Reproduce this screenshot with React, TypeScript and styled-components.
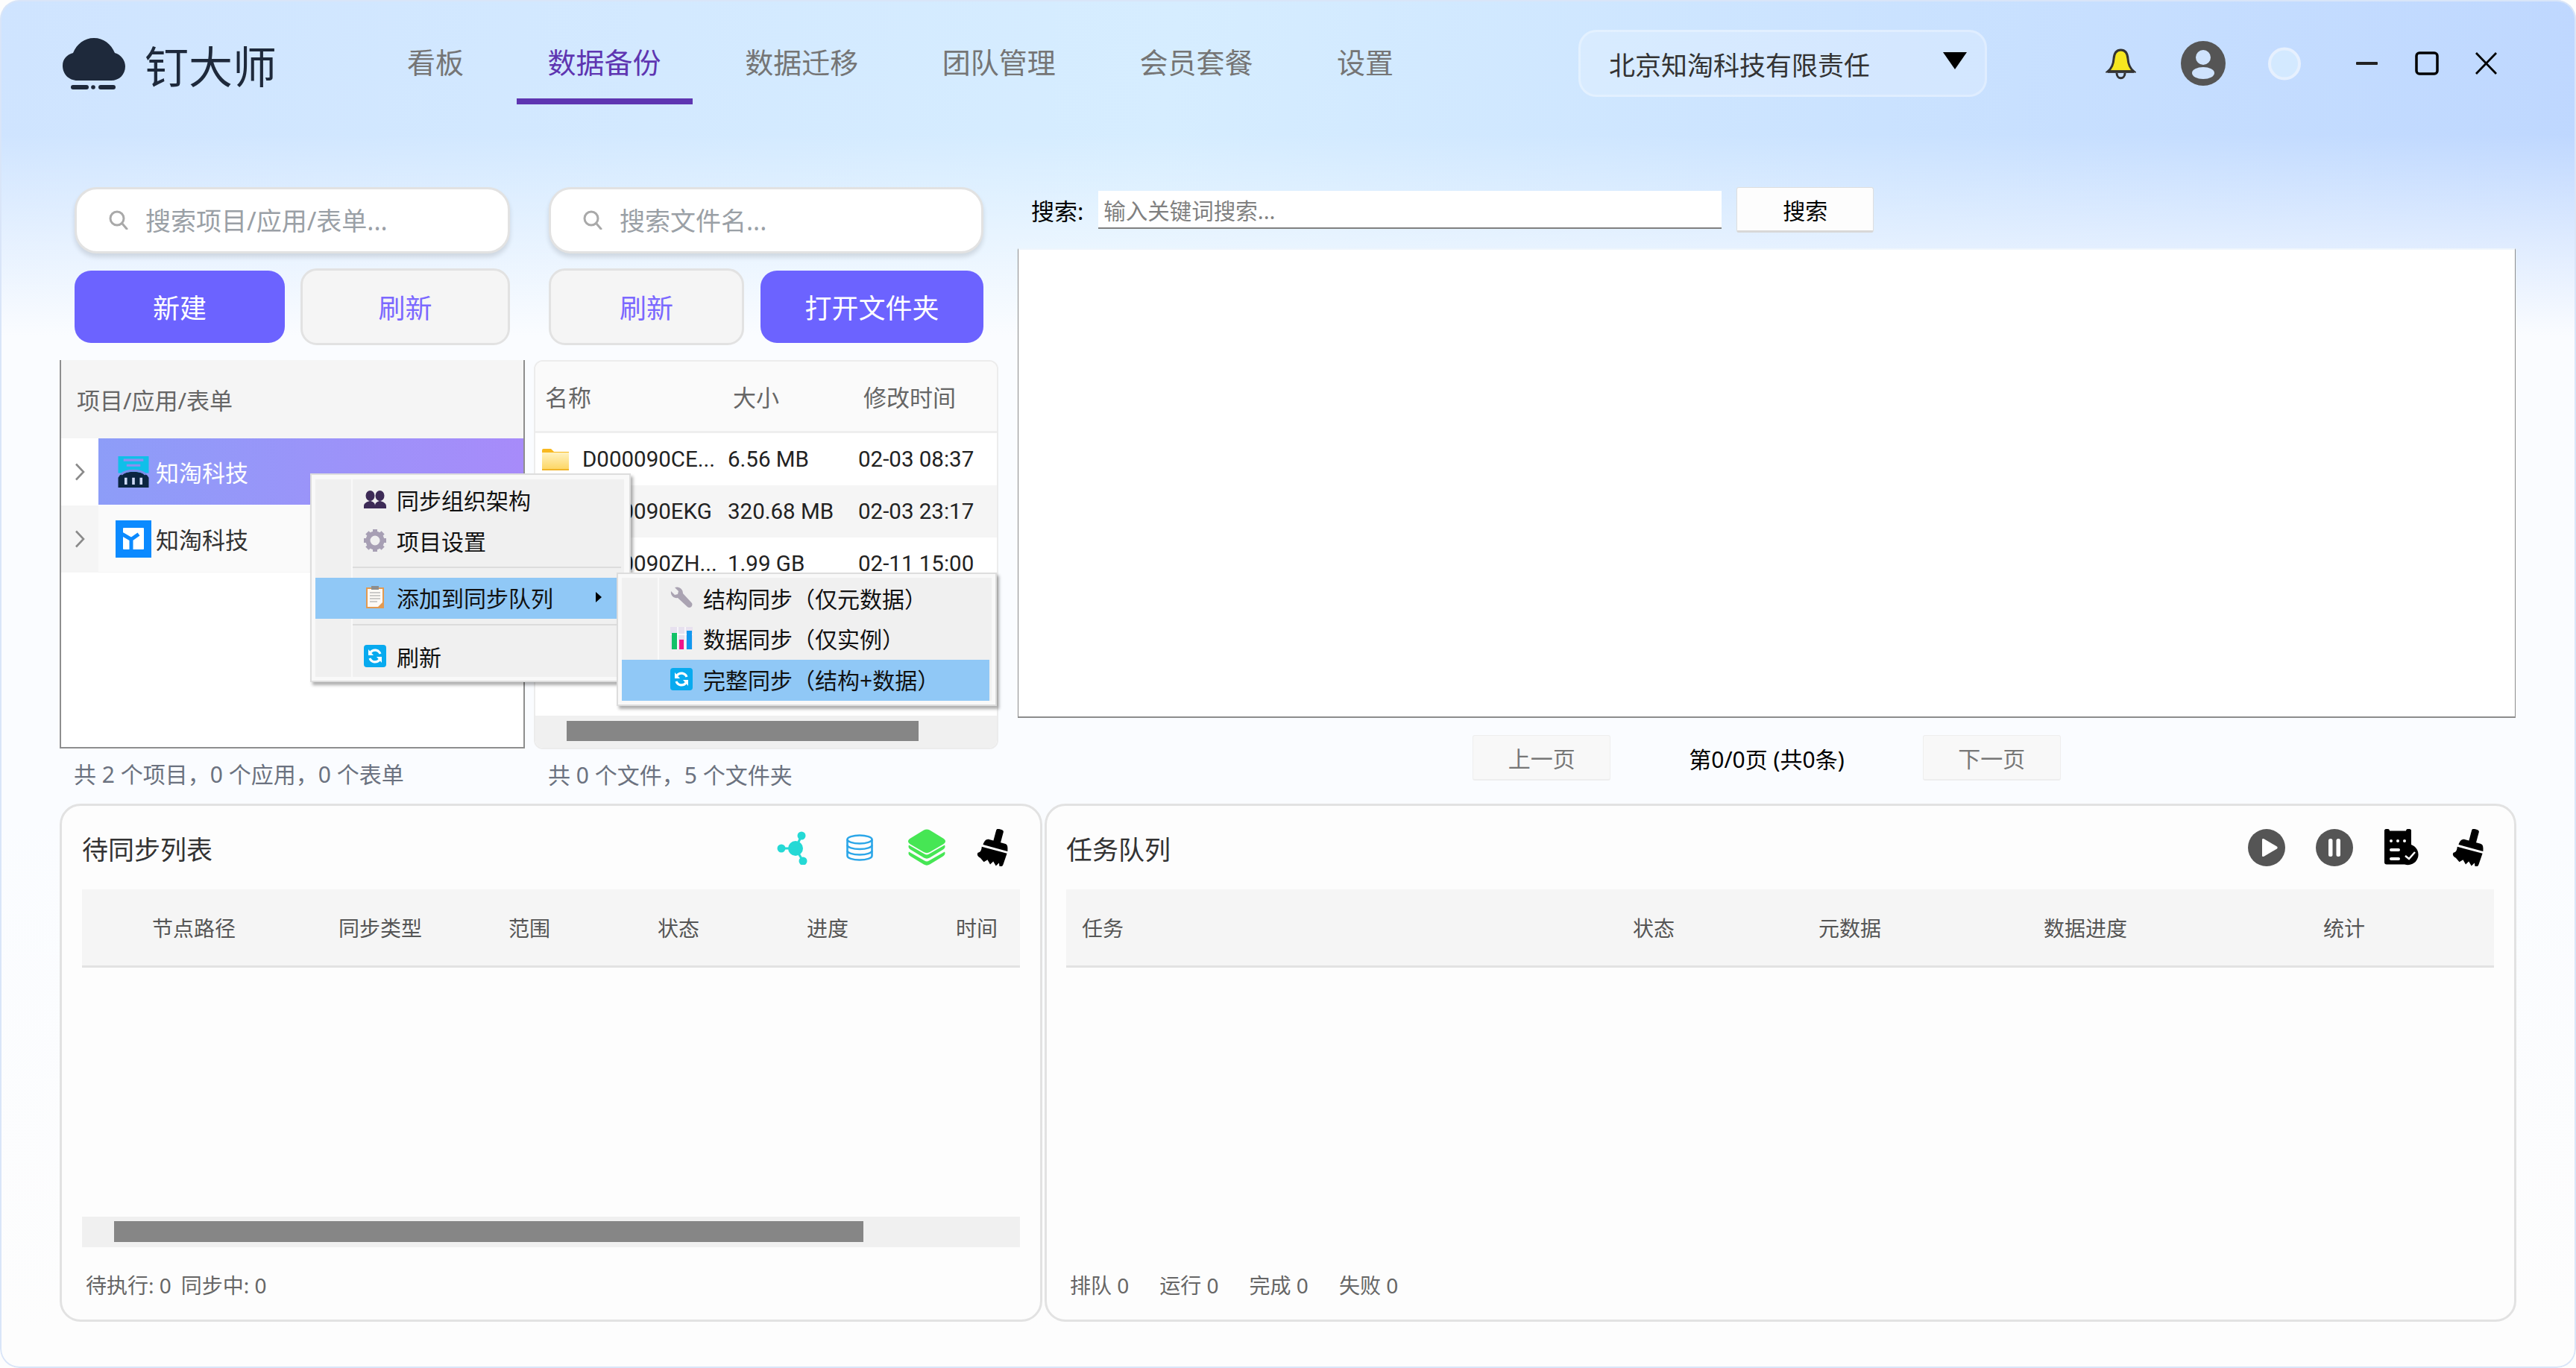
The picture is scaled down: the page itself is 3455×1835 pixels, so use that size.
import React from 'react';
import styled, { createGlobalStyle } from 'styled-components';

const GlobalStyle = createGlobalStyle`
  * { box-sizing: border-box; }
  html, body { margin: 0; padding: 0; background: #fdfdfd; }
  body { font-family: "Noto Sans", "Noto Sans CJK SC", sans-serif; }
`;

const Window = styled.div`
  position: relative;
  width: 3455px;
  height: 1835px;
  overflow: hidden;
  border-radius: 26px;
  box-shadow: inset 0 0 0 2px #d9e5f8;
  background:
    linear-gradient(to bottom, rgba(250, 252, 255, 0) 180px, rgba(250, 252, 255, 1) 450px, #fafcff 1100px, #fdfdfd 1790px),
    linear-gradient(100deg, #cfe4ff 0%, #d6edff 42%, #bbd4ff 100%);
`;

const Header = styled.header`
  display: flex;
  align-items: center;
  height: 140px;
  padding: 30px 106px 0 84px;
`;

const Brand = styled.div`
  display: flex;
  align-items: center;
  gap: 26px;
  width: 420px;
  flex: none;
`;

const BrandName = styled.span`
  font-size: 59px;
  line-height: 1;
  color: #1e293b;
  margin-top: 8px;
`;

const Tabs = styled.nav`
  display: flex;
  align-self: stretch;
  gap: 28.6px;
`;

const Tab = styled.div<{ $active?: boolean }>`
  display: flex;
  align-items: center;
  padding: 0 42px;
  font-size: 38px;
  color: ${(p) => (p.$active ? '#5e35b1' : '#757575')};
  border-bottom: 8px solid ${(p) => (p.$active ? '#5e35b1' : 'transparent')};
`;

const CompanySelect = styled.div`
  display: flex;
  align-items: center;
  justify-content: space-between;
  margin-left: auto;
  width: 548px;
  height: 90px;
  padding: 0 24px 0 38px;
  border: 3px solid rgba(255, 255, 255, 0.28);
  border-radius: 24px;
  background: rgba(255, 255, 255, 0.2);
  font-size: 35px;
  color: #333;
`;

const Caret = styled.span`
  width: 0;
  height: 0;
  border-left: 16px solid transparent;
  border-right: 16px solid transparent;
  border-top: 23px solid #000;
  margin-top: -8px;
`;

const HeaderIcon = styled.svg<{ $ml: number }>`
  display: block;
  flex: none;
  margin-left: ${(p) => p.$ml}px;
`;

const Body = styled.main`
  display: flex;
  gap: 26px;
  margin: 111px 0 0 80px;
  height: 802px;
`;

const Browser = styled.section`
  position: relative;
  display: grid;
  grid-template-columns: 624px 623px;
  column-gap: 12px;
`;

const Column = styled.div`
  display: flex;
  flex-direction: column;
  min-width: 0;
`;

const SearchBox = styled.div`
  display: flex;
  align-items: center;
  height: 89px;
  margin: 0 20px;
  padding-left: 43px;
  gap: 23px;
  padding-bottom: 2px;
  background: #fff;
  border: 3px solid #e2e2e2;
  border-radius: 30px;
  box-shadow: 0 5px 6px rgba(0, 0, 0, 0.12);
`;

const Placeholder = styled.span`
  font-size: 34px;
  color: #9aa0a6;
  white-space: nowrap;
`;

const ButtonRow = styled.div`
  display: flex;
  align-items: center;
  justify-content: space-between;
  height: 103px;
  margin: 20px 20px 0;
`;

const ActionButton = styled.div<{ $primary?: boolean; $w: number }>`
  display: flex;
  align-items: center;
  justify-content: center;
  width: ${(p) => p.$w}px;
  height: ${(p) => (p.$primary ? 97 : 103)}px;
  font-size: 36px;
  border-radius: 22px;
  color: ${(p) => (p.$primary ? '#fff' : '#7b68ff')};
  background: ${(p) => (p.$primary ? '#6c63ff' : '#f5f5f5')};
  border: ${(p) => (p.$primary ? 'none' : '3px solid #e2e2e2')};
`;

const TreePanel = styled.div`
  position: relative;
  height: 521px;
  margin-top: 20px;
  background: #fff;
  border: 2px solid #8e8e8e;
  border-top: none;
`;

const TreeHeader = styled.div`
  display: flex;
  align-items: center;
  height: 105px;
  padding-left: 21px;
  font-size: 31px;
  color: #666;
  background: #f5f5f5;
`;

const TreeRow = styled.div<{ $shade?: boolean }>`
  display: flex;
  height: 90px;
  background: ${(p) => (p.$shade ? '#f5f5f5' : '#fff')};
`;

const Expander = styled.div`
  display: flex;
  align-items: center;
  justify-content: center;
  width: 50px;
  flex: none;
`;

const TreeLabel = styled.div<{ $selected?: boolean }>`
  display: flex;
  align-items: center;
  flex: 1;
  gap: 6px;
  padding-left: 23px;
  font-size: 31px;
  color: ${(p) => (p.$selected ? '#fff' : '#333')};
  background: ${(p) => (p.$selected ? 'linear-gradient(90deg, #8d9df8, #a78bfa)' : '#fafafa')};
  margin-bottom: 1px;
`;

const LogoBox = styled.span`
  display: flex;
  justify-content: center;
  width: 48px;
`;

const FilePanel = styled.div`
  display: flex;
  flex-direction: column;
  height: 522px;
  margin-top: 20px;
  background: #fff;
  border: 2px solid #ececec;
  border-radius: 12px;
  overflow: hidden;
`;

const FileHead = styled.div`
  display: grid;
  grid-template-columns: 248px 175px 1fr;
  align-items: center;
  height: 96px;
  flex: none;
  font-size: 31px;
  color: #666;
  background: #fafafa;
  border-bottom: 3px solid #eee;
`;

const HeadCell = styled.span<{ $pl: number }>`
  padding-left: ${(p) => p.$pl}px;
`;

const FileRows = styled.div`
  flex: 1;
  overflow: hidden;
`;

const FileRow = styled.div<{ $shade?: boolean }>`
  display: grid;
  grid-template-columns: 248px 175px 1fr;
  align-items: center;
  height: 70px;
  font-family: Roboto, "Noto Sans CJK SC", sans-serif;
  font-size: 29.5px;
  color: #222;
  background: ${(p) => (p.$shade ? '#f5f5f5' : '#fff')};
  white-space: nowrap;
`;

const NameCell = styled.span`
  display: flex;
  align-items: center;
  gap: 18px;
  padding-left: 9px;
`;

const PlainCell = styled.span`
  padding-left: 10px;
`;

const ScrollTrack = styled.div<{ $h: number; $pad: number }>`
  flex: none;
  height: ${(p) => p.$h}px;
  padding-top: ${(p) => p.$pad}px;
  background: #f0f0f0;
`;

const ScrollThumb = styled.div<{ $left: number; $w: number; $h: number }>`
  margin-left: ${(p) => p.$left}px;
  width: ${(p) => p.$w}px;
  height: ${(p) => p.$h}px;
  background: #868686;
`;

const StatusText = styled.div`
  margin-top: 18px;
  padding-left: 19px;
  font-size: 30px;
  line-height: 34px;
  color: #6b7280;
`;

const Menu = styled.div<{ $left: number; $top: number; $w: number; $h: number; $pad: string }>`
  position: absolute;
  left: ${(p) => p.$left}px;
  top: ${(p) => p.$top}px;
  width: ${(p) => p.$w}px;
  height: ${(p) => p.$h}px;
  padding: ${(p) => p.$pad};
  background: #f9f9f9;
  border: 2px solid #dddddd;
  box-shadow: 3px 4px 4px rgba(0, 0, 0, 0.32);
`;

const MenuInner = styled.div<{ $pt: number }>`
  height: 100%;
  padding-top: ${(p) => p.$pt}px;
  overflow: hidden;
  background: linear-gradient(to right, #f0f0f0 48px, #f9f9f9 48px, #f9f9f9 50px, #f0f0f0 50px);
`;

const MenuItem = styled.div<{ $active?: boolean; $h?: number }>`
  display: flex;
  align-items: center;
  height: ${(p) => p.$h ?? 55}px;
  padding: 0 0 4px 65px;
  margin-right: 3px;
  font-size: 30px;
  color: #111;
  white-space: nowrap;
  background: ${(p) => (p.$active ? '#90c8f6' : 'transparent')};
`;

const MenuIcon = styled.span`
  display: flex;
  justify-content: center;
  width: 30px;
  margin-right: 14px;
`;

const MenuRule = styled.div<{ $mt: number; $mb: number }>`
  height: 2px;
  margin: ${(p) => p.$mt}px 4px ${(p) => p.$mb}px 50px;
  background: #dcdcdc;
`;

const SubArrow = styled.span`
  margin-left: auto;
  margin-right: 27px;
  width: 0;
  height: 0;
  border-top: 7px solid transparent;
  border-bottom: 7px solid transparent;
  border-left: 8px solid #000;
`;

const Viewer = styled.section`
  display: flex;
  flex-direction: column;
  width: 2009px;
`;

const KeywordRow = styled.div`
  display: flex;
  align-items: center;
  height: 61px;
  padding-left: 18px;
  gap: 20px;
`;

const KeywordLabel = styled.span`
  font-size: 31px;
  color: #000;
`;

const KeywordInput = styled.div`
  display: flex;
  align-items: center;
  width: 836px;
  height: 51px;
  padding: 2px 0 0 7px;
  background: #fff;
  border-bottom: 2px solid #808080;
  font-size: 29.5px;
  color: #808080;
`;

const KeywordButton = styled.div`
  display: flex;
  align-items: center;
  justify-content: center;
  width: 184px;
  height: 61px;
  font-size: 30px;
  color: #000;
  background: #fdfdfd;
  border: 1px solid #dedede;
  border-bottom: 3px solid #d8d8d8;
  border-radius: 3px;
`;

const ResultPane = styled.div`
  height: 630px;
  margin-top: 21px;
  background: #fff;
  border: 1px solid #8c8c8c;
  border-top: 2px solid #eef5fd;
  border-bottom-width: 2px;
`;

const Pager = styled.div`
  display: flex;
  justify-content: center;
  align-items: center;
  gap: 105px;
  height: 61px;
  margin-top: 23px;
`;

const PagerButton = styled.div`
  display: flex;
  align-items: center;
  justify-content: center;
  width: 185px;
  height: 61px;
  font-size: 30px;
  color: #777;
  background: #f8f8f8;
  border: 1px solid #eeeeee;
  border-bottom-width: 2px;
  border-radius: 3px;
`;

const PagerText = styled.span`
  font-size: 30px;
  color: #000;
`;

const Bottom = styled.section`
  display: flex;
  gap: 3px;
  margin: 25px 0 0 80px;
  height: 695px;
`;

const Card = styled.div<{ $w: number; $pl: number }>`
  display: flex;
  flex-direction: column;
  width: ${(p) => p.$w}px;
  padding: 0 27px 0 ${(p) => p.$pl}px;
  background: #fdfdfd;
  border: 3px solid #e2e2e2;
  border-radius: 28px;
`;

const CardHead = styled.div<{ $pr: number }>`
  display: flex;
  align-items: center;
  height: 112px;
  flex: none;
  padding-right: ${(p) => p.$pr}px;
`;

const CardTitle = styled.h2`
  margin: 0 auto 0 0;
  font-size: 35px;
  font-weight: 400;
  color: #333;
`;

const ToolIcon = styled.svg<{ $ml: number }>`
  display: block;
  flex: none;
  margin-left: ${(p) => p.$ml}px;
`;

const TableHead = styled.div<{ $cols: string }>`
  display: grid;
  grid-template-columns: ${(p) => p.$cols};
  align-items: center;
  height: 105px;
  flex: none;
  overflow: hidden;
  font-size: 28px;
  color: #555;
  background: #f5f5f5;
  border-bottom: 3px solid #e2e2e2;
`;

const ColTitle = styled.span<{ $left?: boolean }>`
  text-align: ${(p) => (p.$left ? 'left' : 'center')};
  padding-left: ${(p) => (p.$left ? '21px' : '0')};
`;

const TableBody = styled.div`
  flex: 1;
`;

const CardFoot = styled.div`
  display: flex;
  align-items: center;
  gap: 41px;
  height: 97px;
  flex: none;
  padding: 2px 0 0 5px;
  font-size: 28px;
  color: #666;
`;

const FootGroup = styled.span`
  display: flex;
  gap: 13px;
`;

const SearchGlyph = () => (
  <svg width="26" height="26" viewBox="0 0 26 26" fill="none" stroke="#a9a9a9" strokeWidth="3">
    <circle cx="11" cy="11" r="9" />
    <path d="M18 18l6 7" strokeLinecap="round" />
  </svg>
);

const Chevron = () => (
  <svg width="14" height="24" viewBox="0 0 14 24" fill="none" stroke="#8a8a8a" strokeWidth="2.6">
    <path d="M2 1.5 12 12 2 22.5" />
  </svg>
);

const Folder = () => (
  <svg width="36" height="29" viewBox="0 0 36 29">
    <defs>
      <linearGradient id="folderFill" x1="0" y1="0" x2="0" y2="1">
        <stop offset="0" stopColor="#fff2c0" />
        <stop offset="1" stopColor="#fdd662" />
      </linearGradient>
    </defs>
    <path d="M0 2a2 2 0 0 1 2-2h10l4 4h20v25H0z" fill="#f8b81f" />
    <rect x="0" y="5" width="36" height="23" fill="url(#folderFill)" />
    <rect x="0" y="27" width="36" height="2" fill="#f0b429" />
  </svg>
);

const RefreshTile = () => (
  <svg width="30" height="30" viewBox="0 0 30 30">
    <rect width="30" height="30" rx="4" fill="#08aaef" />
    <g fill="none" stroke="#fff" strokeWidth="3.2">
      <path d="M22 12a7.5 7.5 0 0 0-13-2" />
      <path d="M8 18a7.5 7.5 0 0 0 13 2" />
    </g>
    <path d="M6 6v8h7zM24 24v-8h-7z" fill="#fff" />
  </svg>
);

const People = () => (
  <svg width="30" height="24" viewBox="0 0 30 24" fill="#3d2b56">
    <ellipse cx="8.5" cy="7" rx="6" ry="7" />
    <ellipse cx="21.5" cy="7" rx="6" ry="7" />
    <path d="M0 24v-3c0-4 4-6 8-7h1c4 1 6 3 6 6 0-3 2-5 6-6h1c4 1 8 3 8 7v3z" />
  </svg>
);

const Gear = () => (
  <svg width="30" height="30" viewBox="0 0 30 30">
    <circle cx="15" cy="15" r="9.5" fill="none" stroke="#a79fb4" strokeWidth="6" />
    <g stroke="#a79fb4" strokeWidth="6">
      <path d="M15 0v5M15 25v5M0 15h5M25 15h5M4.4 4.4l3.5 3.5M22.1 22.1l3.5 3.5M4.4 25.6l3.5-3.5M22.1 7.9l3.5-3.500" />
    </g>
  </svg>
);

const Clipboard = () => (
  <svg width="24" height="30" viewBox="0 0 24 30">
    <rect x="1" y="3" width="22" height="26" fill="#fdfaf5" stroke="#e39a50" strokeWidth="2" />
    <rect x="7" y="0" width="10" height="5" fill="#8d8d8d" />
    <path d="M5 9h14M5 13h14M5 17h14M5 21h10" stroke="#9c9c9c" strokeWidth="1.2" />
    <path d="M15 29l8-8v8z" fill="#e39a50" />
  </svg>
);

const Wrench = () => (
  <svg width="30" height="30" viewBox="0 0 30 30">
    <path d="M1 6l5 5 4-1 1-4-5-5c6-2 11 2 11 8l12 13c2 4-3 8-6 5L10 15C5 16 0 12 1 6z" fill="#aaa3b2" />
  </svg>
);

const Bars = () => (
  <svg width="30" height="30" viewBox="0 0 30 30">
    <rect width="30" height="30" fill="#e7e1ef" />
    <path d="M10 0v30M20 0v30M0 10h30" stroke="#fff" strokeWidth="1.4" />
    <rect x="2" y="8" width="7" height="22" fill="#12c168" />
    <rect x="12" y="17" width="6" height="13" fill="#f0148c" />
    <rect x="22" y="5" width="7" height="25" fill="#1298ee" />
  </svg>
);

const Broom = ({ ml }: { ml: number }) => (
  <ToolIcon $ml={ml} width="47" height="50" viewBox="0 0 47 50">
    <g transform="rotate(15 23 25)" fill="#000">
      <rect x="20" y="-1" width="10" height="20" rx="3" />
      <path d="M8 25c0-5 2-9 6-9h22c4 0 5 4 6 9z" />
      <path d="M7 28h35l-1 15c0 3-2 5-4 5l-2-5-3 5-5-5-3 5-5-5-4 4-6-4c-4-1-6-3-5-6 3-1 4-4 3-9z" />
    </g>
  </ToolIcon>
);

export default function App() {
  const syncCols = '300px 200px 200px 200px 200px 200px';
  const taskCols = '640px 296px 230px 402px 292px 56px';
  return (
    <>
      <GlobalStyle />
      <Window>
        <Header>
          <Brand>
            <svg width="84" height="69" viewBox="0 0 84 69" fill="#1e293b">
              <path d="M20 57C8 57 0 48 0 37c0-9 6-15 14-17C19 8 29 0 42 0s23 8 28 20c8 2 14 10 14 18 0 11-8 19-19 19z" />
              <rect x="11" y="63" width="24" height="6" rx="3" />
              <circle cx="41" cy="66" r="2.8" />
              <rect x="48" y="63" width="23" height="6" rx="3" />
            </svg>
            <BrandName>钉大师</BrandName>
          </Brand>
          <Tabs>
            <Tab>看板</Tab>
            <Tab $active>数据备份</Tab>
            <Tab>数据迁移</Tab>
            <Tab>团队管理</Tab>
            <Tab>会员套餐</Tab>
            <Tab>设置</Tab>
          </Tabs>
          <CompanySelect>
            北京知淘科技有限责任
            <Caret />
          </CompanySelect>
          <HeaderIcon $ml={159} width="41" height="43" viewBox="0 0 41 43">
            <path d="M20.5 3c6 0 9 5 9.5 12 .4 7 2 12 8 17H3c6-5 7.600-10 8-17 .5-7 3.500-12 9.500-12z" fill="#f6e71f" stroke="#333" strokeWidth="3" />
            <path d="M3 32h35" stroke="#333" strokeWidth="3.500" />
            <path d="M15 34c0 9 11 9 11 0" fill="none" stroke="#333" strokeWidth="3" />
          </HeaderIcon>
          <HeaderIcon $ml={60} width="60" height="60" viewBox="0 0 60 60">
            <circle cx="30" cy="30" r="30" fill="#555" />
            <circle cx="30" cy="22" r="10" fill="#cfe3fd" />
            <ellipse cx="30" cy="43" rx="15" ry="8" fill="#cfe3fd" />
          </HeaderIcon>
          <HeaderIcon $ml={57} width="44" height="45" viewBox="0 0 44 45">
            <circle cx="22" cy="22.500" r="20" fill="#d3e9ff" stroke="#e6f0fe" strokeWidth="4" />
          </HeaderIcon>
          <HeaderIcon $ml={74} width="29" height="4" viewBox="0 0 29 4">
            <rect width="29" height="4" rx="1" fill="#222" />
          </HeaderIcon>
          <HeaderIcon $ml={50} width="32" height="32" viewBox="0 0 32 32">
            <rect x="2" y="2" width="28" height="28" rx="4" fill="none" stroke="#000" strokeWidth="3.500" />
          </HeaderIcon>
          <HeaderIcon $ml={49} width="29" height="30" viewBox="0 0 29 30">
            <path d="M1 1l27 28M28 1L1 29" stroke="#000" strokeWidth="2.800" />
          </HeaderIcon>
        </Header>

        <Body>
          <Browser>
            <Column>
              <SearchBox>
                <SearchGlyph />
                <Placeholder>搜索项目/应用/表单...</Placeholder>
              </SearchBox>
              <ButtonRow>
                <ActionButton $primary $w={282}>新建</ActionButton>
                <ActionButton $w={281}>刷新</ActionButton>
              </ButtonRow>
              <TreePanel>
                <TreeHeader>项目/应用/表单</TreeHeader>
                <TreeRow>
                  <Expander><Chevron /></Expander>
                  <TreeLabel $selected>
                    <LogoBox>
                      <svg width="42" height="42" viewBox="0 0 40 41">
                        <rect width="40" height="22" fill="#10bfe9" />
                        <path d="M7 5h26M11 12h18" stroke="#8f8ff0" strokeWidth="3" />
                        <path d="M0 41V28C4 18 36 18 40 28v13z" fill="#0b2540" />
                        <path d="M4 24C10 17 30 17 36 24" fill="none" stroke="#7c8de8" strokeWidth="3" />
                        <path d="M10 28v9M20 28v9M30 28v9" stroke="#cdd9f5" strokeWidth="3.500" />
                      </svg>
                    </LogoBox>
                    知淘科技
                  </TreeLabel>
                </TreeRow>
                <TreeRow $shade>
                  <Expander><Chevron /></Expander>
                  <TreeLabel>
                    <LogoBox>
                      <svg width="48" height="50" viewBox="0 0 48 50">
                        <rect width="48" height="50" fill="#0b8aff" />
                        <rect x="10" y="10" width="28" height="29" rx="1" fill="#fff" />
                        <path d="M9 18.500 21 25.500 31 18.500M21 25v15" fill="none" stroke="#0b8aff" strokeWidth="5" />
                      </svg>
                    </LogoBox>
                    知淘科技
                  </TreeLabel>
                </TreeRow>
              </TreePanel>
              <StatusText>共 2 个项目，0 个应用，0 个表单</StatusText>
            </Column>

            <Column>
              <SearchBox>
                <SearchGlyph />
                <Placeholder>搜索文件名...</Placeholder>
              </SearchBox>
              <ButtonRow>
                <ActionButton $w={262}>刷新</ActionButton>
                <ActionButton $primary $w={299}>打开文件夹</ActionButton>
              </ButtonRow>
              <FilePanel>
                <FileHead>
                  <HeadCell $pl={13}>名称</HeadCell>
                  <HeadCell $pl={17}>大小</HeadCell>
                  <HeadCell $pl={17}>修改时间</HeadCell>
                </FileHead>
                <FileRows>
                  <FileRow>
                    <NameCell><Folder />D000090CE...</NameCell>
                    <PlainCell>6.56 MB</PlainCell>
                    <PlainCell>02-03 08:37</PlainCell>
                  </FileRow>
                  <FileRow $shade>
                    <NameCell><Folder />D000090EKG</NameCell>
                    <PlainCell>320.68 MB</PlainCell>
                    <PlainCell>02-03 23:17</PlainCell>
                  </FileRow>
                  <FileRow>
                    <NameCell><Folder />D000090ZH...</NameCell>
                    <PlainCell>1.99 GB</PlainCell>
                    <PlainCell>02-11 15:00</PlainCell>
                  </FileRow>
                </FileRows>
                <ScrollTrack $h={43} $pad={7}>
                  <ScrollThumb $left={42} $w={472} $h={27} />
                </ScrollTrack>
              </FilePanel>
              <StatusText>共 0 个文件，5 个文件夹</StatusText>
            </Column>

            <Menu $left={336} $top={384} $w={430} $h={280} $pad="6px 7px 5px 5px">
              <MenuInner $pt={1}>
                <MenuItem><MenuIcon><People /></MenuIcon>同步组织架构</MenuItem>
                <MenuItem><MenuIcon><Gear /></MenuIcon>项目设置</MenuItem>
                <MenuRule $mt={6} $mb={13} />
                <MenuItem $active><MenuIcon><Clipboard /></MenuIcon>添加到同步队列<SubArrow /></MenuItem>
                <MenuRule $mt={7} $mb={15} />
                <MenuItem><MenuIcon><RefreshTile /></MenuIcon>刷新</MenuItem>
              </MenuInner>
            </Menu>
            <Menu $left={747} $top={517} $w={510} $h={179} $pad="5px">
              <MenuInner $pt={2}>
                <MenuItem $h={54}><MenuIcon><Wrench /></MenuIcon>结构同步（仅元数据）</MenuItem>
                <MenuItem $h={54}><MenuIcon><Bars /></MenuIcon>数据同步（仅实例）</MenuItem>
                <MenuItem $active><MenuIcon><RefreshTile /></MenuIcon>完整同步（结构+数据）</MenuItem>
              </MenuInner>
            </Menu>
          </Browser>

          <Viewer>
            <KeywordRow>
              <KeywordLabel>搜索:</KeywordLabel>
              <KeywordInput>输入关键词搜索...</KeywordInput>
              <KeywordButton>搜索</KeywordButton>
            </KeywordRow>
            <ResultPane />
            <Pager>
              <PagerButton>上一页</PagerButton>
              <PagerText>第0/0页 (共0条)</PagerText>
              <PagerButton>下一页</PagerButton>
            </Pager>
          </Viewer>
        </Body>

        <Bottom>
          <Card $w={1318} $pl={27}>
            <CardHead $pr={11}>
              <CardTitle>待同步列表</CardTitle>
              <ToolIcon $ml={0} width="45" height="45" viewBox="0 0 45 45" fill="#25d9d5">
                <circle cx="27" cy="23" r="10" />
                <circle cx="35" cy="6" r="5.500" />
                <circle cx="8" cy="23" r="5.500" />
                <circle cx="37" cy="40" r="5.500" />
                <path d="M27 23L35 6M27 23H8M27 23l10 17" stroke="#25d9d5" strokeWidth="3" />
              </ToolIcon>
              <ToolIcon $ml={50} width="36" height="36" viewBox="0 0 36 36" fill="none" stroke="#2ba6e8" strokeWidth="2.600">
                <ellipse cx="18" cy="7" rx="16.500" ry="5.500" />
                <path d="M1.500 7v22c0 3 7 5.500 16.500 5.500S34.500 32 34.500 29V7" />
                <path d="M1.500 14.500c0 3 7 5.500 16.500 5.500s16.500-2.500 16.500-5.500M1.500 22c0 3 7 5.500 16.500 5.500S34.500 25 34.500 22" />
              </ToolIcon>
              <ToolIcon $ml={47} width="50" height="50" viewBox="0 0 50 50" fill="#46e654">
                <path d="M21 1.500c2.500-1.500 5.500-1.500 8 0l18 11c4 2.500 4 5.500 0 8L29 31c-2.500 1.500-5.500 1.500-8 0L3 20.500c-4-2.500-4-5.500 0-8z" />
                <path d="M1 21.500 22 33.500c2 1.200 4 1.200 6 0l21-12c1 2 .7 4-2 6L29 38.500c-2.500 1.500-5.500 1.500-8 0L3 27.500c-2.700-2-3-4-2-6z" />
                <path d="M1 30.500 22 42.500c2 1.200 4 1.200 6 0l21-12c1 2 .7 4-2 6L29 47.500c-2.500 1.500-5.500 1.500-8 0L3 36.500c-2.700-2-3-4-2-6z" />
              </ToolIcon>
              <Broom ml={42} />
            </CardHead>
            <TableHead $cols={syncCols}>
              <ColTitle>节点路径</ColTitle>
              <ColTitle>同步类型</ColTitle>
              <ColTitle>范围</ColTitle>
              <ColTitle>状态</ColTitle>
              <ColTitle>进度</ColTitle>
              <ColTitle>时间</ColTitle>
            </TableHead>
            <TableBody />
            <ScrollTrack $h={41} $pad={6}>
              <ScrollThumb $left={43} $w={1005} $h={28} />
            </ScrollTrack>
            <CardFoot>
              <FootGroup>
                <span>待执行: 0</span>
                <span>同步中: 0</span>
              </FootGroup>
            </CardFoot>
          </Card>

          <Card $w={1974} $pl={26}>
            <CardHead $pr={9}>
              <CardTitle>任务队列</CardTitle>
              <ToolIcon $ml={0} width="50" height="50" viewBox="0 0 50 50">
                <circle cx="25" cy="25" r="25" fill="#555" />
                <path d="M19 14.500c0-1.500 1-2 2.500-1.200l17 10c1.500 1 1.500 2.400 0 3.400l-17 10c-1.500.8-2.500.3-2.500-1.200z" fill="#fff" />
              </ToolIcon>
              <ToolIcon $ml={41} width="50" height="50" viewBox="0 0 50 50">
                <circle cx="25" cy="25" r="25" fill="#555" />
                <rect x="17" y="13" width="5.500" height="24" rx="2.500" fill="#fff" />
                <rect x="27.500" y="13" width="5.500" height="24" rx="2.500" fill="#fff" />
              </ToolIcon>
              <ToolIcon $ml={42} width="49" height="50" viewBox="0 0 49 50">
                <path d="M2 0h3c1 0 2 1 2 2.500h22C29 1 30 0 31 0h3c1 0 2 1 2 2v19a13 13 0 1 1-9 26.500H3c-2 0-3-1-3-3V2c0-1 1-2 2-2z" fill="#000" />
                <g fill="#fff">
                  <circle cx="9" cy="16" r="2" />
                  <circle cx="18" cy="16" r="2" />
                  <circle cx="27" cy="16" r="2" />
                  <rect x="7" y="26" width="14" height="4" rx="2" />
                  <rect x="7" y="38" width="14" height="4" rx="2" />
                </g>
                <path d="M28 36l5 4 8-9" fill="none" stroke="#fff" strokeWidth="2.500" />
              </ToolIcon>
              <Broom ml={42} />
            </CardHead>
            <TableHead $cols={taskCols}>
              <ColTitle $left>任务</ColTitle>
              <ColTitle>状态</ColTitle>
              <ColTitle>元数据</ColTitle>
              <ColTitle>数据进度</ColTitle>
              <ColTitle>统计</ColTitle>
            </TableHead>
            <TableBody />
            <CardFoot>
              <span>排队 0</span>
              <span>运行 0</span>
              <span>完成 0</span>
              <span>失败 0</span>
            </CardFoot>
          </Card>
        </Bottom>
      </Window>
    </>
  );
}
